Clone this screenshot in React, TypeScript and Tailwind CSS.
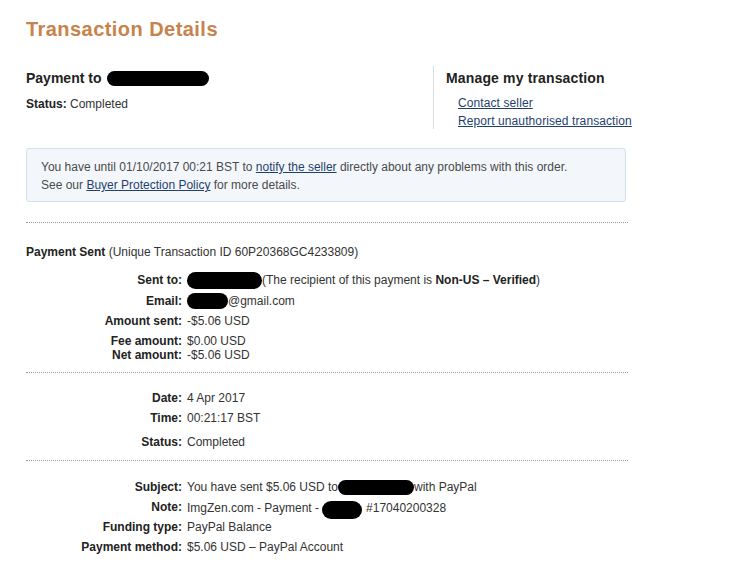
import React from "react";

/* redaction blob, drawn over names in the screenshot */
function Blob({ w, h = 16, className = "" }: { w: number; h?: number; className?: string }) {
  return (
    <span
      className={`inline-block rounded-full bg-black align-middle ${className}`}
      style={{ width: w, height: h }}
    />
  );
}

type Row = { label: string; value: React.ReactNode; h: string };

function DetailRows({ rows }: { rows: Row[] }) {
  return (
    <div>
      {rows.map((r) => (
        <div key={r.label} className={`flex leading-[20px] ${r.h}`}>
          <div className="w-[156px] shrink-0 text-right font-bold text-[#222]">{r.label}</div>
          <div className="pl-[5px] whitespace-nowrap">{r.value}</div>
        </div>
      ))}
    </div>
  );
}

function Dotted() {
  return <div className="w-[602px] border-t border-dotted border-[#9a9a9a]" />;
}

export default function App() {
  const sentRows: Row[] = [
    {
      label: "Sent to:",
      h: "h-[21px]",
      value: (
        <span className="flex items-center">
          <Blob w={75} h={17} />
          <span>
            (The recipient of this payment is <b className="text-[#222]">Non-US – Verified</b>)
          </span>
        </span>
      ),
    },
    {
      label: "Email:",
      h: "h-[20px]",
      value: (
        <span className="flex items-center">
          <Blob w={41} h={16} />
          <span>@gmail.com</span>
        </span>
      ),
    },
    { label: "Amount sent:", h: "h-[20px]", value: "-$5.06 USD" },
    { label: "Fee amount:", h: "h-[14px]", value: "$0.00 USD" },
    { label: "Net amount:", h: "h-[20px]", value: "-$5.06 USD" },
  ];

  const dateRows: Row[] = [
    { label: "Date:", h: "h-[20px]", value: "4 Apr 2017" },
    { label: "Time:", h: "h-[24px]", value: "00:21:17 BST" },
    { label: "Status:", h: "h-[20px]", value: "Completed" },
  ];

  const noteRows: Row[] = [
    {
      label: "Subject:",
      h: "h-[20px]",
      value: (
        <span className="flex items-center">
          <span>You have sent $5.06 USD to</span>
          <Blob w={76} h={15} />
          <span>with PayPal</span>
        </span>
      ),
    },
    {
      label: "Note:",
      h: "h-[20px]",
      value: (
        <span className="flex items-center">
          <span>ImgZen.com - Payment -</span>
          <Blob w={40} h={18} className="ml-[3px] mt-[4px]" />
          <span className="ml-[4px]">#17040200328</span>
        </span>
      ),
    },
    { label: "Funding type:", h: "h-[20px]", value: "PayPal Balance" },
    { label: "Payment method:", h: "h-[20px]", value: "$5.06 USD – PayPal Account" },
  ];

  return (
    <div className="min-h-screen bg-white pl-[26px] text-[12px] text-[#333] [font-family:'Liberation_Sans',Arial,sans-serif]">
      {/* HEADER */}
      <h1 className="pt-[17px] text-[20px] leading-[24px] font-bold tracking-[0.45px] text-[#c7834c]">
        Transaction Details
      </h1>

      <div className="mt-[27px] flex">
        <div className="w-[407px]">
          <div className="flex h-[20px] items-center text-[14px] leading-[20px] font-bold text-[#222]">
            Payment to
            <Blob w={102} h={15} className="ml-[6px]" />
          </div>
          <div className="mt-[6px] leading-[20px]">
            <b className="text-[#222]">Status:</b> Completed
          </div>
        </div>

        <div className="-mt-[2px] h-[63px] border-l border-[#dcdcdc] pl-[12px]">
          <div className="pt-[2px] text-[14px] leading-[20px] font-bold tracking-[0.15px] text-[#222]">
            Manage my transaction
          </div>
          <div className="mt-[6px] flex flex-col pl-[12px] leading-[18px] tracking-[0.1px]">
            <a href="#" className="text-[#1f3f6e] underline">
              Contact seller
            </a>
            <a href="#" className="text-[#1f3f6e] underline">
              Report unauthorised transaction
            </a>
          </div>
        </div>
      </div>

      {/* NOTICE */}
      <div className="mt-[19px] h-[54px] w-[600px] rounded-[3px] border border-[#d3dfe9] bg-[#f3f7fb] px-[14px] pt-[9px] leading-[18px] text-[#4a4a4a]">
        <div>
          You have until 01/10/2017 00:21 BST to{" "}
          <a href="#" className="text-[#1f3f6e] underline">
            notify the seller
          </a>{" "}
          directly about any problems with this order.
        </div>
        <div>
          See our{" "}
          <a href="#" className="text-[#1f3f6e] underline">
            Buyer Protection Policy
          </a>{" "}
          for more details.
        </div>
      </div>

      <div className="mt-[20px]">
        <Dotted />
      </div>

      {/* PAYMENT SENT */}
      <div className="pt-[19px] pb-[7px]">
        <div className="leading-[20px]">
          <b className="text-[#222]">Payment Sent</b> (Unique Transaction ID 60P20368GC4233809)
        </div>
        <div className="mt-[8px]">
          <DetailRows rows={sentRows} />
        </div>
      </div>

      <Dotted />

      <div className="pt-[15px] pb-[8px]">
        <DetailRows rows={dateRows} />
      </div>

      <Dotted />

      <div className="pt-[16px]">
        <DetailRows rows={noteRows} />
      </div>
    </div>
  );
}
